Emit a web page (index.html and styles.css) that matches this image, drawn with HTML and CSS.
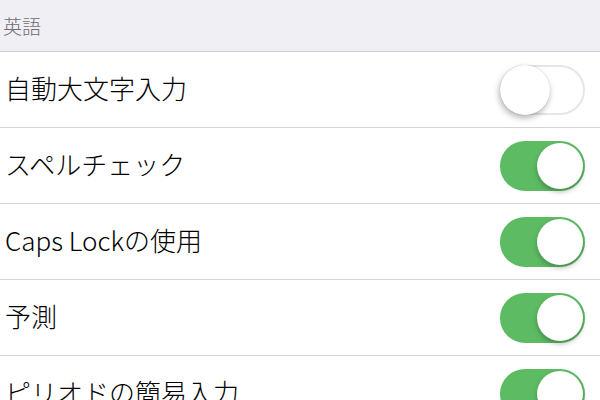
FILE: index.html
```html
<!DOCTYPE html>
<html lang="ja">
<head>
    <meta charset="UTF-8">
    <meta name="viewport" content="width=device-width, initial-scale=1.0">
    <title>キーボード設定</title>
    <link rel="stylesheet" href="styles.css">
</head>
<body>
    <!-- セクション見出し -->
    <div class="section-header">英語</div>

    <!-- 設定リスト -->
    <ul class="settings">
        <li class="row">
            <span class="label">自動大文字入力</span>
            <span class="toggle"><span class="knob"></span></span>
        </li>
        <li class="row">
            <span class="label">スペルチェック</span>
            <span class="toggle on"><span class="knob"></span></span>
        </li>
        <li class="row">
            <span class="label">Caps Lockの使用</span>
            <span class="toggle on"><span class="knob"></span></span>
        </li>
        <li class="row">
            <span class="label">予測</span>
            <span class="toggle on"><span class="knob"></span></span>
        </li>
        <li class="row">
            <span class="label">ピリオドの簡易入力</span>
            <span class="toggle on"><span class="knob"></span></span>
        </li>
    </ul>
</body>
</html>
```

FILE: styles.css
```css
* {
    margin: 0;
    padding: 0;
    box-sizing: border-box;
}

body {
    font-family: "Noto Sans CJK JP", "Liberation Sans", sans-serif;
    background-color: #efeff4;
    overflow: hidden;
}

/* 見出し */
.section-header {
    height: 52px;
    padding: 15px 0 0 3px;
    font-size: 19px;
    font-weight: 300;
    line-height: 1.2;
    color: #6d6d72;
    border-bottom: 1px solid #cfcfd3;
}

.settings {
    list-style-type: none;
    background-color: #fff;
}

.row {
    display: flex;
    align-items: center;
    justify-content: space-between;
    height: 76px;
    padding: 0 15px 0 5px;
    border-bottom: 1px solid #d4d4d6;
}

.label {
    font-size: 26px;
    font-weight: 300;
    line-height: 1.2;
    color: #000;
    padding-bottom: 4px;
}

/* トグルスイッチ */
.toggle {
    position: relative;
    width: 85px;
    height: 50px;
    border-radius: 25px;
    border: 2px solid #e6e6e6;
    background-color: #fff;
}

.toggle .knob {
    position: absolute;
    top: -2px;
    left: -2px;
    width: 50px;
    height: 50px;
    border-radius: 50%;
    background-color: #fff;
    box-shadow: -1px 3px 6px rgba(0, 0, 0, 0.3), 0 0 1px rgba(0, 0, 0, 0.2);
}

.toggle.on {
    background-color: #5dbb63;
    border-color: #5dbb63;
}

.toggle.on .knob {
    top: 0;
    left: auto;
    right: 0;
    width: 46px;
    height: 46px;
    box-shadow: 0 3px 5px rgba(0, 0, 0, 0.25);
}
```
